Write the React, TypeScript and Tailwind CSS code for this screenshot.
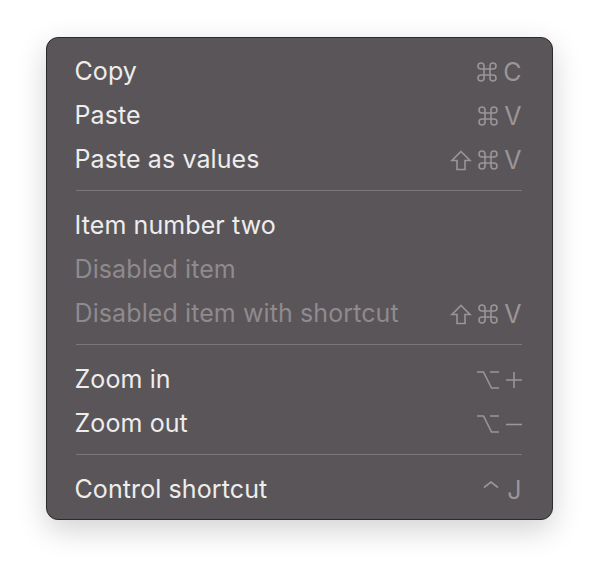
import React from "react";

type Key = "cmd" | "shift" | "opt" | "plus" | "minus" | "ctrl" | string;

type Item = {
  label: string;
  keys?: Key[];
  disabled?: boolean;
};

const groups: Item[][] = [
  [
    { label: "Copy", keys: ["cmd", "C"] },
    { label: "Paste", keys: ["cmd", "V"] },
    { label: "Paste as values", keys: ["shift", "cmd", "V"] },
  ],
  [
    { label: "Item number two" },
    { label: "Disabled item", disabled: true },
    { label: "Disabled item with shortcut", keys: ["shift", "cmd", "V"], disabled: true },
  ],
  [
    { label: "Zoom in", keys: ["opt", "plus"] },
    { label: "Zoom out", keys: ["opt", "minus"] },
  ],
  [{ label: "Control shortcut", keys: ["ctrl", "J"] }],
];

function KeyGlyph({ k }: { k: Key }) {
  const common = {
    fill: "none",
    stroke: "currentColor",
    strokeWidth: 1.6,
    strokeLinejoin: "miter" as const,
  };
  if (k === "cmd")
    return (
      <svg width="20" height="20" viewBox="0 0 20 20" {...common}>
        <path d="M7 7H4A3 3 0 1 1 7 4V16A3 3 0 1 1 4 13H16A3 3 0 1 1 13 16V4A3 3 0 1 1 16 7Z" />
      </svg>
    );
  if (k === "shift")
    return (
      <svg width="22" height="21" viewBox="0 0 22 21" {...common}>
        <path d="M11 1.5L20 10.5H15V19.5H7V10.5H2Z" />
      </svg>
    );
  if (k === "opt")
    return (
      <svg width="24" height="20" viewBox="0 0 24 20" {...common}>
        <path d="M1 2H7.5L15.5 18H23M14 2H23" />
      </svg>
    );
  if (k === "plus")
    return (
      <svg width="16" height="20" viewBox="0 0 16 20" {...common}>
        <path d="M0 10H16M8 2V18" />
      </svg>
    );
  if (k === "minus")
    return (
      <svg width="16" height="20" viewBox="0 0 16 20" {...common}>
        <path d="M0 10.5H16" />
      </svg>
    );
  if (k === "ctrl")
    return (
      <svg width="16" height="20" viewBox="0 0 16 20" className="mr-[2px]" {...common}>
        <path d="M1 7.5L8 2L15 7.5" />
      </svg>
    );
  return <span className="leading-none">{k}</span>;
}

function Row({ item }: { item: Item }) {
  return (
    <div className="flex h-[44px] items-center justify-between">
      <span className={item.disabled ? "text-[#8f8a8e]" : "text-[#ededed]"}>{item.label}</span>
      {item.keys && (
        <span className="flex items-center gap-[6px] text-[#9a9599]">
          {item.keys.map((k, i) => (
            <KeyGlyph key={i} k={k} />
          ))}
        </span>
      )}
    </div>
  );
}

export default function App() {
  return (
    <div className="flex h-[574px] w-[598px] items-start justify-center bg-white pt-[37px] font-['Inter',sans-serif] text-[25px] tracking-[0.1px]">
      <div className="w-[507px] rounded-[12px] border border-[#2c2a2c] bg-[#5a5559] pl-[28px] pr-[30px] pt-[12px] pb-[7px] shadow-[0_10px_30px_rgba(0,0,0,0.18)]">
        {groups.map((g, gi) => (
          <div key={gi}>
            {gi > 0 && <div className="ml-px mt-[8px] mb-[13px] h-px bg-[#7b767a]" />}
            {g.map((item) => (
              <Row key={item.label} item={item} />
            ))}
          </div>
        ))}
      </div>
    </div>
  );
}
